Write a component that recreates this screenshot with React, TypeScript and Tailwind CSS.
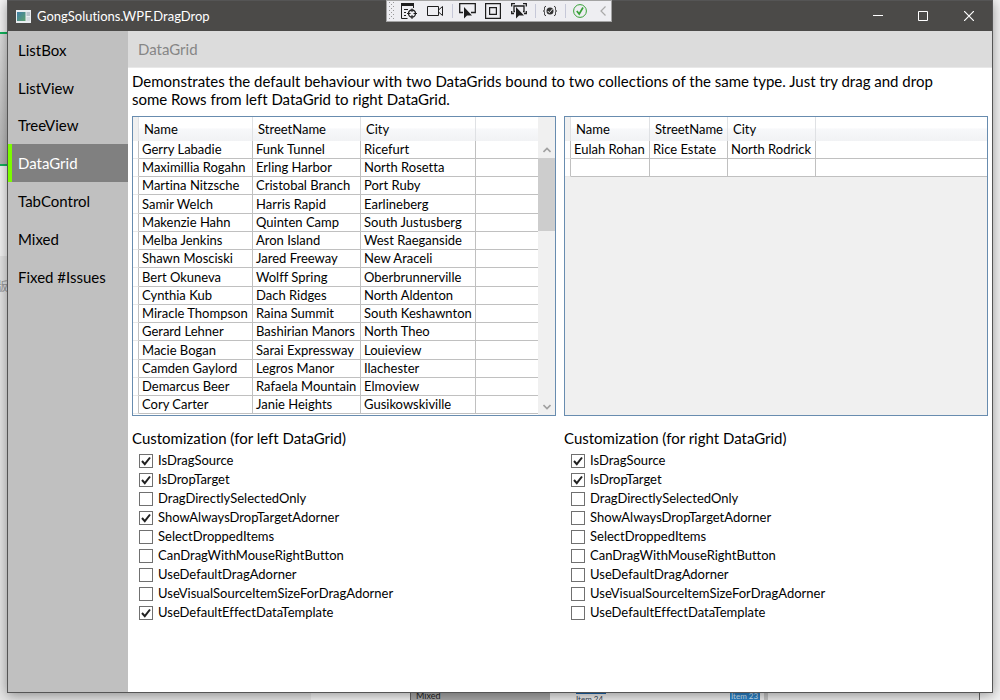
import clsx from "clsx"

type Person = { name: string; street: string; city: string }

const people: Person[] = [
  { name: "Gerry Labadie", street: "Funk Tunnel", city: "Ricefurt" },
  { name: "Maximillia Rogahn", street: "Erling Harbor", city: "North Rosetta" },
  { name: "Martina Nitzsche", street: "Cristobal Branch", city: "Port Ruby" },
  { name: "Samir Welch", street: "Harris Rapid", city: "Earlineberg" },
  { name: "Makenzie Hahn", street: "Quinten Camp", city: "South Justusberg" },
  { name: "Melba Jenkins", street: "Aron Island", city: "West Raeganside" },
  { name: "Shawn Mosciski", street: "Jared Freeway", city: "New Araceli" },
  { name: "Bert Okuneva", street: "Wolff Spring", city: "Oberbrunnerville" },
  { name: "Cynthia Kub", street: "Dach Ridges", city: "North Aldenton" },
  { name: "Miracle Thompson", street: "Raina Summit", city: "South Keshawnton" },
  { name: "Gerard Lehner", street: "Bashirian Manors", city: "North Theo" },
  { name: "Macie Bogan", street: "Sarai Expressway", city: "Louieview" },
  { name: "Camden Gaylord", street: "Legros Manor", city: "Ilachester" },
  { name: "Demarcus Beer", street: "Rafaela Mountain", city: "Elmoview" },
  { name: "Cory Carter", street: "Janie Heights", city: "Gusikowskiville" },
]

const dropped: Person[] = [
  { name: "Eulah Rohan", street: "Rice Estate", city: "North Rodrick" },
  { name: "", street: "", city: "" },
]

const pages = ["ListBox", "ListView", "TreeView", "DataGrid", "TabControl", "Mixed", "Fixed #Issues"]

const options = [
  "IsDragSource",
  "IsDropTarget",
  "DragDirectlySelectedOnly",
  "ShowAlwaysDropTargetAdorner",
  "SelectDroppedItems",
  "CanDragWithMouseRightButton",
  "UseDefaultDragAdorner",
  "UseVisualSourceItemSizeForDragAdorner",
  "UseDefaultEffectDataTemplate",
]

function Desktop() {
  return (
    <div className="absolute inset-0 overflow-hidden bg-[#f4f4f4]" aria-hidden="true">
      <div className="absolute top-8 left-0 h-[134px] w-2 border-y-2 border-[#12b45c] bg-linear-to-b from-[#dedede] to-[#b4b4b4]" />
      <div className="absolute top-64 left-0 h-full w-[311px] bg-[#e6e6e6]" />
      <span className="absolute top-[279px] -left-1 text-xs text-[#999]">版</span>
      <div className="absolute bottom-0 left-[410px] flex h-2 w-[570px] border-x border-[#666] bg-[#ececec]">
        <div className="w-[139px] overflow-hidden bg-[#a9a9a9] pl-[5px] text-[9px] leading-[8px] text-[#222]">Mixed</div>
        <div className="ml-[26px] w-[30px] overflow-hidden border-t-2 border-[#1b62a8] text-[8px] leading-[10px] text-[#345]">Item 24</div>
        <div className="ml-[124px] w-[30px] overflow-hidden bg-[#2b7fc4] pl-px text-[8px] leading-[8px] text-[#cfe4f5]">Item 23</div>
        <div className="ml-1 w-1 bg-[#c4c4c4]" />
      </div>
    </div>
  )
}

function DebugToolbar() {
  const button = "flex h-full items-center justify-center"
  return (
    <div className="absolute -top-px left-1/2 flex h-[22px] w-[226px] -translate-x-[114px] items-center border border-[#a3a3a3] bg-[#eeeef2] text-[#1e1e1e]">
      <svg className="ml-[2px] h-[18px] w-[6px]" viewBox="0 0 6 18" fill="#999">
        {[1, 5, 9, 13, 17].map((y) => (
          <g key={y}>
            <path d={`M0 ${y - 1}h1v1h-1zM4 ${y - 1}h1v1h-1z`} />
            <path d={`M2 ${y + 1}h1v1h-1z`} />
          </g>
        ))}
      </svg>
      <button className={clsx(button, "ml-[6px]")} aria-label="Go to Live Visual Tree">
        <svg width="16" height="16" viewBox="0 0 16 16" fill="none" stroke="currentColor">
          <path d="M0 1.500h13" strokeWidth="3" />
          <path d="M.5 2v13.500h6M12.500 3v2M3 6.500h4M3 9.500h2M3 12.500h2" />
          <circle cx="11" cy="10.500" r="3.500" strokeWidth="1.300" />
          <path d="M11 5.500V9M11 12v4M6 10.500h3.500M12.500 10.500H16" />
        </svg>
      </button>
      <button className={clsx(button, "ml-[10px]")} aria-label="Show in XAML Live Preview">
        <svg width="17" height="12" viewBox="0 0 17 12" fill="none" stroke="currentColor">
          <path d="M.5 1.500h11v9H.5zM11.500 5l4-3.500v9l-4-3.500" />
        </svg>
      </button>
      <span className="ml-2 h-[14px] w-px bg-[#c6c8d8]" />
      <button className={clsx(button, "ml-[6px]")} aria-label="Select Element">
        <svg width="17" height="16" viewBox="0 0 17 16" fill="none" stroke="currentColor" strokeWidth="1.300">
          <path d="M4 9.500H.7V.7h15.600v8.800H12" />
          <path d="M5 4v11.500l3-3h5z" fill="currentColor" stroke="none" />
        </svg>
      </button>
      <button className={clsx(button, "ml-[9px]")} aria-label="Display Layout Adorners">
        <svg width="16" height="16" viewBox="0 0 16 16" fill="none" stroke="currentColor" strokeWidth="1.200">
          <path d="M.6.6h14.800v14.800H.6zM4.600 4.600h6.800v6.800H4.600z" />
        </svg>
      </button>
      <button className={clsx(button, "ml-[10px]")} aria-label="Track Focused Element">
        <svg width="16" height="16" viewBox="0 0 16 16" fill="none" stroke="currentColor" strokeWidth="1.300">
          <path d="M.7 3.500V.7H4M12 .7h3.300v2.800M.7 8v2.500H3M15.300 8v2.500H13M4 8.500H3V3h10v5.500h-1" />
          <path d="M5 4v11.500l3-3h5z" fill="currentColor" stroke="none" />
        </svg>
      </button>
      <span className="ml-2 h-[14px] w-px bg-[#c6c8d8]" />
      <button className={clsx(button, "ml-[7px]")} aria-label="Binding Failures">
        <svg width="14" height="14" viewBox="0 0 14 14" fill="none" stroke="currentColor">
          <path d="M3 2.500c-1.500 0-1.500.5-1.500 2S1.500 7 .5 7c1 0 1 1 1 2.500s0 2 1.500 2M11 2.500c1.500 0 1.500.5 1.500 2s0 2.500 1 2.500c-1 0-1 1-1 2.500s0 2-1.500 2" />
          <circle cx="7" cy="7" r="3.500" fill="#333" stroke="none" />
          <path d="M4.800 7l1.500 1.700L9.500 5" stroke="#eee" />
        </svg>
      </button>
      <span className="ml-2 h-[14px] w-px bg-[#c6c8d8]" />
      <button className={clsx(button, "ml-[7px]")} aria-label="Hot Reload available">
        <svg width="14" height="14" viewBox="0 0 14 14" fill="none" stroke="#37a137">
          <circle cx="7" cy="7" r="6.400" />
          <path d="M3.800 7l2.400 3L10 3.500" strokeWidth="1.700" />
        </svg>
      </button>
      <button className={clsx(button, "ml-[13px]")} aria-label="Collapse toolbar">
        <svg width="6" height="10" viewBox="0 0 6 10" fill="none" stroke="#a9a9a9" strokeWidth="1.200">
          <path d="M5.500.5L1 5l4.500 4.500" />
        </svg>
      </button>
    </div>
  )
}

function TitleBar() {
  return (
    <header className="flex h-[30px] shrink-0 items-center bg-[#4b4a48] text-white">
      <svg className="ml-2 h-[13px] w-[15px]" viewBox="0 0 15 13">
        <defs>
          <linearGradient id="app-icon" x1="0" y1="0" x2="1" y2="1">
            <stop offset="0" stopColor="#3f7fa8" />
            <stop offset="1" stopColor="#5da06c" />
          </linearGradient>
        </defs>
        <path d="M0 0h15v13H0z" fill="#e9edf0" />
        <path d="M1 2h8.500v9H1z" fill="url(#app-icon)" />
        <path d="M10.500 2H14v4h-3.500z" fill="#b9c4cc" />
        <path d="M10.500 7H14v4h-3.500z" fill="#d5dbe0" />
      </svg>
      <h1 className="ml-[6px] text-[13px] leading-[18px]">GongSolutions.WPF.DragDrop</h1>
      <div className="ml-auto flex h-full">
        <button className="flex w-[45px] items-center justify-center" aria-label="Minimize">
          <svg width="10" height="10" viewBox="0 0 10 10" stroke="currentColor">
            <path d="M0 4.500h10" />
          </svg>
        </button>
        <button className="flex w-[45px] items-center justify-center" aria-label="Maximize">
          <svg width="10" height="10" viewBox="0 0 10 10" fill="none" stroke="currentColor">
            <path d="M.5.5h9v9h-9z" />
          </svg>
        </button>
        <button className="flex w-[47px] items-center justify-center" aria-label="Close">
          <svg width="10" height="10" viewBox="0 0 10 10" stroke="currentColor" strokeWidth="1.200">
            <path d="M0 0l10 10M10 0L0 10" />
          </svg>
        </button>
      </div>
    </header>
  )
}

function Sidebar() {
  return (
    <nav className="w-[120px] shrink-0 bg-[#c0c0c0]">
      {pages.map((page) => (
        <a
          key={page}
          href="#"
          className={clsx(
            "flex h-[38px] items-center border-l-4 pl-[6px] text-[15px] nth-[3]:h-[37px]",
            page === "DataGrid" ? "border-[#7cfc00] bg-[#808080] text-white" : "border-transparent",
          )}
        >
          {page}
        </a>
      ))}
    </nav>
  )
}

function ScrollBar() {
  return (
    <div className="flex w-[17px] shrink-0 flex-col items-center bg-[#f0f0f0] pt-6 text-[#a0a0a0]">
      <button className="flex h-[17px] items-center" aria-label="Scroll up">
        <svg width="8" height="6" viewBox="0 0 8 6" fill="none" stroke="currentColor" strokeWidth="1.600">
          <path d="M.5 5L4 1.500 7.500 5" />
        </svg>
      </button>
      <div className="h-[73px] w-full bg-[#cdcdcd]" />
      <button className="mt-auto flex h-[17px] items-center" aria-label="Scroll down">
        <svg width="8" height="6" viewBox="0 0 8 6" fill="none" stroke="currentColor" strokeWidth="1.600">
          <path d="M.5 1L4 4.500 7.500 1" />
        </svg>
      </button>
    </div>
  )
}

type DataGridProps = { label: string; rows: Person[]; columns: string[]; scrolling?: boolean }

function DataGrid({ label, rows, columns, scrolling }: DataGridProps) {
  const head = "border-r border-[#dfe1e4] pl-[5px] text-left font-normal"
  const cell = "border-r border-b border-[#c0c0c0] pl-[3px]"
  return (
    <div className="flex h-[300px] overflow-hidden border border-[#688caf] bg-[#f0f0f0]">
      <div className="min-w-0 flex-1 overflow-hidden">
        <table aria-label={label} className="w-full table-fixed border-separate border-spacing-0 text-[13px] leading-[17px] whitespace-nowrap">
          <colgroup>
            <col className="w-[6px]" />
            {columns.map((width, i) => (
              <col key={i} className={width} />
            ))}
            <col />
          </colgroup>
          <thead>
            <tr className="h-6 bg-linear-to-b from-white from-45% via-[#f7f8fa] via-50% to-[#f1f2f4]">
              <td className="border-r border-[#dfe1e4] bg-[#f0f0f0]" />
              <th className={head}>Name</th>
              <th className={head}>StreetName</th>
              <th className={head}>City</th>
              <td />
            </tr>
          </thead>
          <tbody>
            {rows.map((row, i) => (
              <tr key={i} className="h-[18px] bg-white nth-[4n]:h-[19px]">
                <td className="border-r border-b border-r-[#c0c0c0] border-b-[#e8e8e8]" />
                <td className={cell}>{row.name}</td>
                <td className={cell}>{row.street}</td>
                <td className={cell}>{row.city}</td>
                <td className="border-b border-[#c0c0c0]" />
              </tr>
            ))}
            {scrolling && (
              <tr className="h-[18px] bg-white">
                <td colSpan={5} />
              </tr>
            )}
          </tbody>
        </table>
      </div>
      {scrolling && <ScrollBar />}
    </div>
  )
}

function Customization({ title, checked }: { title: string; checked: string[] }) {
  return (
    <fieldset className="mt-[13px]">
      <legend className="text-[15px] leading-[18px]">{title}</legend>
      <div className="mt-1 pl-[7px]">
        {options.map((option) => (
          <label key={option} className="flex h-[19px] items-center gap-[5px] text-[13px] leading-[19px]">
            <span className="grid">
              <input
                type="checkbox"
                defaultChecked={checked.includes(option)}
                className="peer col-start-1 row-start-1 size-[14px] appearance-none border border-[#707070] bg-white"
              />
              <svg
                className="pointer-events-none invisible col-start-1 row-start-1 size-[14px] peer-checked:visible"
                viewBox="0 0 14 14"
                fill="none"
                stroke="#212121"
                strokeWidth="2"
              >
                <path d="M3 7l2.800 3.200L11 3.500" />
              </svg>
            </span>
            {option}
          </label>
        ))}
      </div>
    </fieldset>
  )
}

export default function App() {
  return (
    <div className="relative min-h-screen overflow-hidden px-[7px] pb-[7px] font-['Lato','Noto_Sans_CJK_SC',sans-serif] text-black [font-variant-ligatures:none]">
      <Desktop />
      <div className="relative flex min-h-[calc(100vh-7px)] flex-col border border-[#555] bg-white shadow-[0_2px_12px_rgba(0,0,0,0.4)]">
        <TitleBar />
        <DebugToolbar />
        <div className="flex flex-1">
          <Sidebar />
          <main className="min-w-0 flex-1">
            <h2 className="flex h-[37px] items-center border-b border-[#e8e8e8] bg-[#dcdcdc] pl-[10px] text-[15px] text-[#868686]">
              DataGrid
            </h2>
            <div className="p-1">
              <p className="pr-6 text-[15px] leading-[18px]">
                Demonstrates the default behaviour with two DataGrids bound to two collections of the same type. Just try
                drag and drop some Rows from left DataGrid to right DataGrid.
              </p>
              <div className="mt-2 grid grid-cols-2 gap-2">
                <section>
                  <DataGrid
                    label="Left DataGrid"
                    rows={people}
                    columns={["w-[114px]", "w-[108px]", "w-[115px]"]}
                    scrolling
                  />
                  <Customization
                    title="Customization (for left DataGrid)"
                    checked={["IsDragSource", "IsDropTarget", "ShowAlwaysDropTargetAdorner", "UseDefaultEffectDataTemplate"]}
                  />
                </section>
                <section>
                  <DataGrid
                    label="Right DataGrid"
                    rows={dropped}
                    columns={["w-[79px]", "w-[78px]", "w-[88px]"]}
                  />
                  <Customization title="Customization (for right DataGrid)" checked={["IsDragSource", "IsDropTarget"]} />
                </section>
              </div>
            </div>
          </main>
        </div>
      </div>
    </div>
  )
}
